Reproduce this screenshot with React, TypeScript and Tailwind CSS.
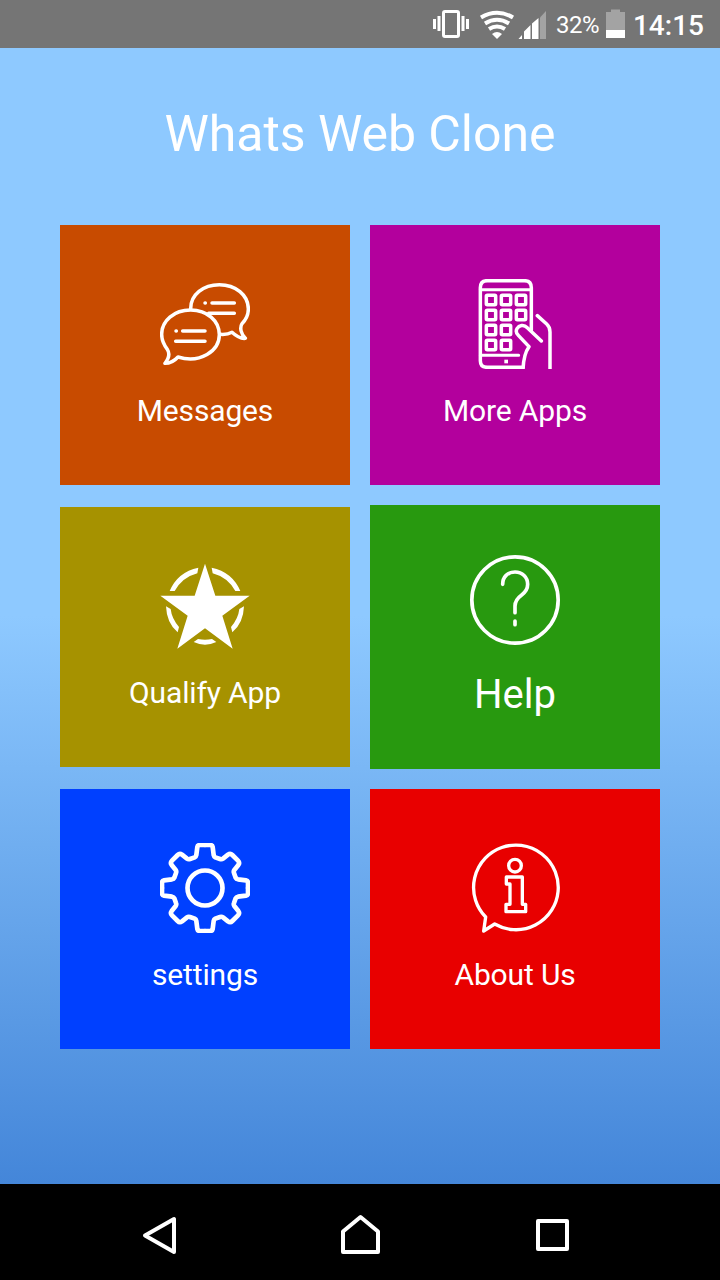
import type { ReactNode } from "react";

function MessagesIcon() {
  return (
    <svg className="size-[90px]" viewBox="30 27 270 270" fill="none" stroke="#fff" strokeWidth="10.500" strokeLinecap="round" strokeLinejoin="round">
      <path d="M122 116C122 74 160 44 208 44C257 44 295 75 295 117C295 136 287 150 276 161C268 174 274 193 286 205C270 207 258 198 246 187C235 193 224 194 211 193" />
      <path d="M122 120C72 120 35 152 35 193C35 211 41 224 52 238C61 252 56 266 45 280C62 280 75 271 84 261C151 281 208 243 208 194C208 152 171 120 122 120Z" />
      <path d="M165 99h1M186 99h67M176 130h77M78 183h1M98 183h67M77 214h88" />
    </svg>
  );
}

function AppsIcon() {
  const cells = [
    [80, 77], [125, 77], [170, 77],
    [80, 122], [125, 122], [170, 122],
    [80, 167], [125, 167],
    [80, 212], [125, 212],
  ];
  return (
    <svg className="size-[90px]" viewBox="30 27 270 270" fill="none" stroke="#fff" strokeWidth="10.500" strokeLinecap="round" strokeLinejoin="round">
      <path d="M214 180V53Q214 32 193 32H82Q61 32 61 53V272Q61 292 82 292H189" />
      <path d="M61 59H214M61 256H176" strokeWidth="9" />
      {cells.map(([x, y]) => (
        <rect key={`${x}-${y}`} x={x - 1} y={y - 1} width="28" height="28" rx="3" />
      ))}
      <path d="M232 137L260 162Q270 171 270 186V300M244 213L202 173C191 162 177 166 171 176C167 183 169 190 175 196L207 230C196 245 190 267 189 300" />
      <rect x="133" y="269" width="11" height="11" fill="#fff" stroke="none" />
    </svg>
  );
}

function StarIcon() {
  return (
    <svg className="size-[90px]" viewBox="30 33 270 270" fill="#fff">
      <path d="M165 41L196 137H299L217 197L248 296L165 235L82 296L113 197L31 137H134Z" />
      <path d="M59 123Q83 66 145 53L142 70Q97 82 74 123Z" />
      <path d="M271 123Q247 66 185 53L188 70Q233 82 256 123Z" />
      <path d="M48 169L62 177Q65 205 87 231L83 247Q50 220 48 169Z" />
      <path d="M282 169L268 177Q265 205 243 231L247 247Q280 220 282 169Z" />
      <path d="M131 276L144 267Q165 272 186 267L199 276Q165 292 131 276Z" />
    </svg>
  );
}

function HelpIcon() {
  return (
    <svg className="size-[90px]" viewBox="30 30 270 270" fill="none" stroke="#fff" strokeWidth="11" strokeLinecap="round">
      <circle cx="165" cy="165" r="129.500" />
      <path d="M128 118C128 96 143 81 165 81C187 81 203 97 203 118C203 132 196 142 185 150C170 161 165 169 165 183V203M165 228V239" />
    </svg>
  );
}

function SettingsIcon() {
  const quarter =
    "M165 36H180Q187 36 188 42L191 66Q192 71 196 73L210 78Q215 80 219 77L234 65Q241 60 247 66L264 83Q270 89 265 96L253 111Q250 115 252 120L257 134Q259 138 264 139L288 142Q294 143 294 150V165";
  return (
    <svg className="size-[90px]" viewBox="30 30 270 270" fill="none" stroke="#fff" strokeWidth="14" strokeLinejoin="round" strokeLinecap="round">
      {[0, 90, 180, 270].map((a) => (
        <path key={a} d={quarter} transform={`rotate(${a} 165 165)`} />
      ))}
      <circle cx="165" cy="165" r="52.500" />
    </svg>
  );
}

function InfoIcon() {
  return (
    <svg className="size-[90px]" viewBox="30 30 270 270" fill="none" stroke="#fff" strokeWidth="10" strokeLinejoin="round">
      <path d="M77 252A127 127 0 1 1 104 273L71 294Z" />
      <circle cx="165" cy="98" r="19" />
      <path d="M139 132H187V214H197V236H138V214H150V153H139Z" />
    </svg>
  );
}

type TileProps = { color: string; label: string; icon: ReactNode; large?: boolean };

function Tile({ color, label, icon, large }: TileProps) {
  return (
    <button
      type="button"
      className={`flex flex-col items-center text-white ${color} ${large ? "h-[264px] gap-[26px] pt-[50px]" : "h-[260px] gap-[22px] pt-[54px]"}`}
    >
      {icon}
      <span className={large ? "text-[40px] leading-[48px]" : "text-[30px] leading-[40px] tracking-[-0.15px]"}>{label}</span>
    </button>
  );
}

function StatusBar() {
  return (
    <header className="flex h-12 items-center bg-[#757575] pr-4 pl-[432px] text-white">
      <svg className="h-12 w-[124px] shrink-0" viewBox="432 0 124 48">
        <g fill="#fff">
          <path d="M433 19h3v10h-3zM437.5 16h3v15h-3zM461.500 16h3v15h-3zM466 19h3v10h-3z" />
          <path d="M524 31.500L530.500 25V39H524zM532 23.500L538.500 18V39H532zM518.500 39L522 35V39z" />
        </g>
        <rect x="443.500" y="11.500" width="15" height="25" rx="1.500" fill="none" stroke="#fff" strokeWidth="3" />
        <path d="M540 17.500L546 11V39H540z" fill="#a3a3a3" />
        <g fill="none" stroke="#fff" strokeWidth="4">
          <path d="M481 17.500Q497 8 513 17.500M485 23.500Q497 16 509 23.500M489 29Q497 24 505 29" />
        </g>
        <path d="M492 34Q497 30 502 34L497 39Z" fill="#fff" />
      </svg>
      <span className="w-[50px] pt-0.5 text-[24px] leading-7 tracking-[-0.5px]">32%</span>
      <svg className="h-12 w-5 shrink-0" viewBox="0 0 20 48">
        <path d="M0 12H5V9.500H14V12H19V30H0z" fill="#a3a3a3" />
        <path d="M0 30H19V38H0z" fill="#fff" />
      </svg>
      <span className="pt-1 pl-[7px] text-[28px] leading-8 font-medium">14:15</span>
    </header>
  );
}

function NavigationBar() {
  return (
    <nav className="h-24 bg-black">
      <div className="flex h-full items-center justify-between px-[140px]">
        <svg className="h-24 w-10" viewBox="140 1184 40 96" fill="none" stroke="#fff" strokeWidth="4" strokeLinejoin="round">
          <path d="M174 1219V1252L145 1235.500Z" />
        </svg>
        <svg className="h-24 w-10" viewBox="340 1184 40 96" fill="none" stroke="#fff" strokeWidth="4" strokeLinejoin="round">
          <path d="M343 1252V1231.500L360.500 1217L378 1231.500V1252Z" />
        </svg>
        <svg className="h-24 w-10" viewBox="540 1184 40 96" overflow="visible" fill="none" stroke="#fff" strokeWidth="4" strokeLinejoin="round">
          <path d="M538 1221H567V1249H538Z" />
        </svg>
      </div>
    </nav>
  );
}

export default function App() {
  return (
    <div className="flex h-[1280px] w-[720px] flex-col overflow-hidden font-['Roboto',sans-serif]">
      <StatusBar />
      <main className="flex flex-1 flex-col items-center bg-linear-to-b from-[#8ec9ff] from-50% to-[#4486d9] pt-14">
        <h1 className="text-[50px] leading-[60px] tracking-[-0.05px] text-white">Whats Web Clone</h1>
        <div className="mt-[61px] grid w-[600px] grid-cols-2 items-center gap-5">
          <Tile color="bg-[#c84b00]" label="Messages" icon={<MessagesIcon />} />
          <Tile color="bg-[#b3009d]" label="More Apps" icon={<AppsIcon />} />
          <Tile color="bg-[#a69200]" label="Qualify App" icon={<StarIcon />} />
          <Tile color="bg-[#28990f]" label="Help" icon={<HelpIcon />} large />
          <Tile color="bg-[#0040ff]" label="settings" icon={<SettingsIcon />} />
          <Tile color="bg-[#e80000]" label="About Us" icon={<InfoIcon />} />
        </div>
      </main>
      <NavigationBar />
    </div>
  );
}
